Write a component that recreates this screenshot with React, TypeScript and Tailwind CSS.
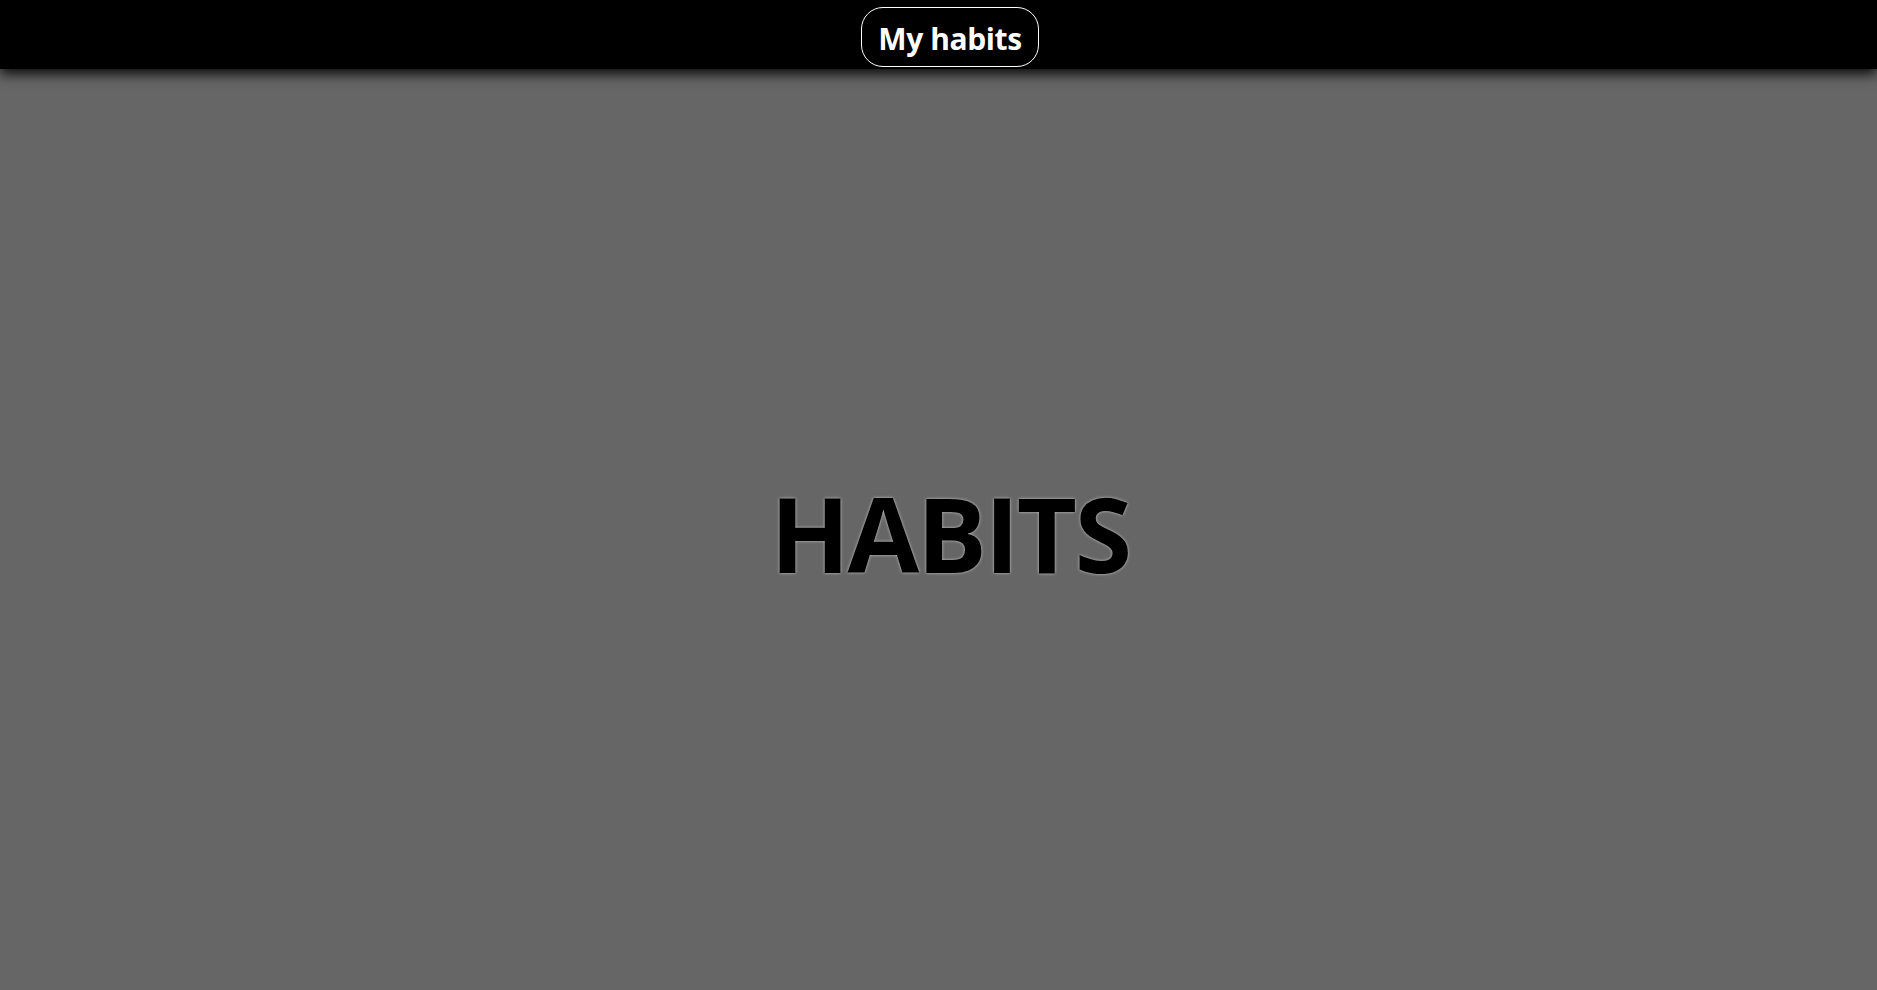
export default function App() {
  return (
    <div className="min-h-screen w-full bg-[#666666] flex flex-col" style={{ fontFamily: '"Open Sans", "Noto Sans", sans-serif' }}>
      <header className="h-[69px] bg-black flex items-start justify-center pt-[7px] pl-[23px] shadow-[0_5px_12px_rgba(0,0,0,0.9)] relative z-10">
        <div className="w-[178px] h-[60px] border border-white rounded-[22px] flex items-center justify-center pt-[3px] text-white font-bold text-[30px] tracking-[-0.4px]">
          My habits
        </div>
      </header>
      <main className="flex-1 flex items-center justify-center pl-[23px] h-[921px]">
        <h1 className="text-black font-bold text-[104px] leading-none tracking-[-2.3px] [text-shadow:0_0_3px_#d0d0d0] mt-[6px]">
          HABITS
        </h1>
      </main>
    </div>
  );
}
